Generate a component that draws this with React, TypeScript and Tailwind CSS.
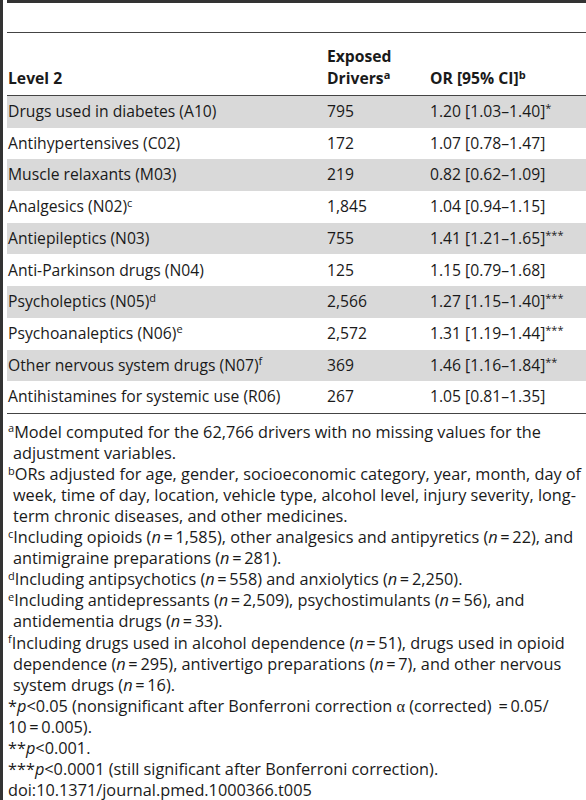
import React from 'react';

type Row = { name: string; sup?: string; n: string; or: string; stars?: string };

const rows: Row[] = [
  { name: 'Drugs used in diabetes (A10)', n: '795', or: '1.20 [1.03–1.40]', stars: '*' },
  { name: 'Antihypertensives (C02)', n: '172', or: '1.07 [0.78–1.47]' },
  { name: 'Muscle relaxants (M03)', n: '219', or: '0.82 [0.62–1.09]' },
  { name: 'Analgesics (N02)', sup: 'c', n: '1,845', or: '1.04 [0.94–1.15]' },
  { name: 'Antiepileptics (N03)', n: '755', or: '1.41 [1.21–1.65]', stars: '***' },
  { name: 'Anti-Parkinson drugs (N04)', n: '125', or: '1.15 [0.79–1.68]' },
  { name: 'Psycholeptics (N05)', sup: 'd', n: '2,566', or: '1.27 [1.15–1.40]', stars: '***' },
  { name: 'Psychoanaleptics (N06)', sup: 'e', n: '2,572', or: '1.31 [1.19–1.44]', stars: '***' },
  { name: 'Other nervous system drugs (N07)', sup: 'f', n: '369', or: '1.46 [1.16–1.84]', stars: '**' },
  { name: 'Antihistamines for systemic use (R06)', n: '267', or: '1.05 [0.81–1.35]' },
];

const N = ({ v }: { v: string }) => (
  <>
    (<i>n</i>{'\u2009=\u2009'}{v})
  </>
);

const Sup = ({ c }: { c: string }) => <sup className="text-[11px]">{c}</sup>;

export default function App() {
  return (
    <div
      className="min-h-[800px] bg-white flex text-[15.7px] text-[#1a1a1a]"
      style={{ fontFamily: '"Open Sans", "Liberation Sans", sans-serif' }}
    >
      <div className="w-[3px] bg-[#333] shrink-0" />
      <div className="flex-1 ml-[4px]">
        <div className="h-[3px] bg-[#333]" />
        <div className="h-[29px]" />
        <div className="h-px bg-[#444]" />

        {/* header */}
        <div className="grid grid-cols-[320px_103px_1fr] h-[62px] items-end pb-[6px] font-bold leading-[22px]">
          <div className="pl-[1px]">Level 2</div>
          <div>
            Exposed
            <br />
            Drivers<Sup c="a" />
          </div>
          <div>
            OR [95% CI]<Sup c="b" />
          </div>
        </div>
        <div className="h-px bg-[#444]" />

        {rows.map((r, i) => (
          <div
            key={r.name}
            className={`grid grid-cols-[320px_103px_1fr] h-[31.7px] items-center ${i % 2 === 0 ? 'bg-[#d9d9d9]' : 'bg-white'}`}
          >
            <div className="pl-[1px]">
              {r.name}
              {r.sup && <Sup c={r.sup} />}
            </div>
            <div>{r.n}</div>
            <div>
              {r.or}
              {r.stars && <span className="text-[11px] align-top">{r.stars}</span>}
            </div>
          </div>
        ))}
        <div className="h-px bg-[#444]" />

        {/* footnotes */}
        <div className="pt-[8px] text-[16.3px] leading-[21.06px] whitespace-nowrap pl-[1px]">
          <div><Sup c="a" />Model computed for the 62,766 drivers with no missing values for the</div>
          <div className="pl-[5px]">adjustment variables.</div>
          <div><Sup c="b" />ORs adjusted for age, gender, socioeconomic category, year, month, day of</div>
          <div className="pl-[5px]">week, time of day, location, vehicle type, alcohol level, injury severity, long-</div>
          <div className="pl-[5px]">term chronic diseases, and other medicines.</div>
          <div><Sup c="c" />Including opioids <N v="1,585" />, other analgesics and antipyretics <N v="22" />, and</div>
          <div className="pl-[5px]">antimigraine preparations <N v="281" />.</div>
          <div><Sup c="d" />Including antipsychotics <N v="558" /> and anxiolytics <N v="2,250" />.</div>
          <div><Sup c="e" />Including antidepressants <N v="2,509" />, psychostimulants <N v="56" />, and</div>
          <div className="pl-[5px]">antidementia drugs <N v="33" />.</div>
          <div><Sup c="f" />Including drugs used in alcohol dependence <N v="51" />, drugs used in opioid</div>
          <div className="pl-[5px]">dependence <N v="295" />, antivertigo preparations <N v="7" />, and other nervous</div>
          <div className="pl-[5px]">system drugs <N v="16" />.</div>
          <div>
            *<i>p</i>&lt;0.05 (nonsignificant after Bonferroni correction{' '}
            <span style={{ fontFamily: '"Liberation Serif", serif' }}>α</span> (corrected) {'\u2009=\u2009'}0.05/
          </div>
          <div>10{'\u2009=\u2009'}0.005).</div>
          <div>**<i>p</i>&lt;0.001.</div>
          <div>***<i>p</i>&lt;0.0001 (still significant after Bonferroni correction).</div>
          <div>doi:10.1371/journal.pmed.1000366.t005</div>
        </div>
      </div>
    </div>
  );
}
